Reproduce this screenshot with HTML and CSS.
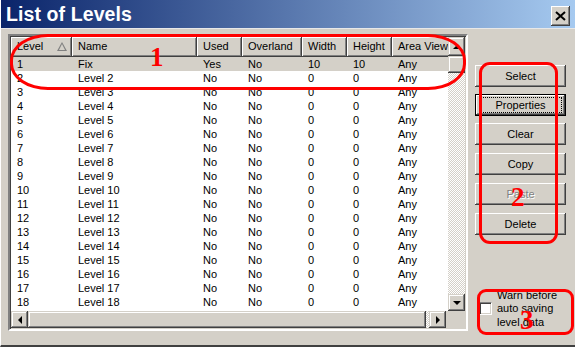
FILE: index.html
```html
<!DOCTYPE html>
<html lang="en">
<head>
  <meta charset="UTF-8">
  <title>List of Levels</title>
  <link rel="stylesheet" href="styles.css">
</head>
<body>
  <div class="window">
    <div class="titlebar">
      <span class="title">List of Levels</span>
      <button class="close">
        <svg width="11" height="10" viewBox="0 0 11 10"><path d="M1 1 L10 9 M10 1 L1 9" stroke="#000" stroke-width="2"/></svg>
      </button>
    </div>

    <div class="main">
      <div class="listview">
        <div class="lv-top">
          <div class="grid">
            <div class="row head">
              <span>Level<i class="sort"></i></span><span>Name</span><span>Used</span><span>Overland</span><span>Width</span><span>Height</span><span>Area View</span>
            </div>
            <div class="row sel"><span>1</span><span>Fix</span><span>Yes</span><span>No</span><span>10</span><span>10</span><span>Any</span></div>
            <div class="row"><span>2</span><span>Level 2</span><span>No</span><span>No</span><span>0</span><span>0</span><span>Any</span></div>
            <div class="row"><span>3</span><span>Level 3</span><span>No</span><span>No</span><span>0</span><span>0</span><span>Any</span></div>
            <div class="row"><span>4</span><span>Level 4</span><span>No</span><span>No</span><span>0</span><span>0</span><span>Any</span></div>
            <div class="row"><span>5</span><span>Level 5</span><span>No</span><span>No</span><span>0</span><span>0</span><span>Any</span></div>
            <div class="row"><span>6</span><span>Level 6</span><span>No</span><span>No</span><span>0</span><span>0</span><span>Any</span></div>
            <div class="row"><span>7</span><span>Level 7</span><span>No</span><span>No</span><span>0</span><span>0</span><span>Any</span></div>
            <div class="row"><span>8</span><span>Level 8</span><span>No</span><span>No</span><span>0</span><span>0</span><span>Any</span></div>
            <div class="row"><span>9</span><span>Level 9</span><span>No</span><span>No</span><span>0</span><span>0</span><span>Any</span></div>
            <div class="row"><span>10</span><span>Level 10</span><span>No</span><span>No</span><span>0</span><span>0</span><span>Any</span></div>
            <div class="row"><span>11</span><span>Level 11</span><span>No</span><span>No</span><span>0</span><span>0</span><span>Any</span></div>
            <div class="row"><span>12</span><span>Level 12</span><span>No</span><span>No</span><span>0</span><span>0</span><span>Any</span></div>
            <div class="row"><span>13</span><span>Level 13</span><span>No</span><span>No</span><span>0</span><span>0</span><span>Any</span></div>
            <div class="row"><span>14</span><span>Level 14</span><span>No</span><span>No</span><span>0</span><span>0</span><span>Any</span></div>
            <div class="row"><span>15</span><span>Level 15</span><span>No</span><span>No</span><span>0</span><span>0</span><span>Any</span></div>
            <div class="row"><span>16</span><span>Level 16</span><span>No</span><span>No</span><span>0</span><span>0</span><span>Any</span></div>
            <div class="row"><span>17</span><span>Level 17</span><span>No</span><span>No</span><span>0</span><span>0</span><span>Any</span></div>
            <div class="row"><span>18</span><span>Level 18</span><span>No</span><span>No</span><span>0</span><span>0</span><span>Any</span></div>
          </div>
          <div class="vscroll">
            <div class="sbtn"><i class="arr up"></i></div>
            <div class="sbtn thumb"></div>
            <div class="track"></div>
            <div class="sbtn"><i class="arr down"></i></div>
          </div>
        </div>
        <div class="hscroll">
          <div class="sbtn"><i class="arr left"></i></div>
          <div class="htrack"><div class="sbtn hthumb"></div></div>
          <div class="sbtn"><i class="arr right"></i></div>
          <div class="corner"></div>
        </div>
      </div>

      <div class="side">
        <div class="buttons">
          <button class="btn">Select</button>
          <button class="btn default"><span class="focus">Properties</span></button>
          <button class="btn">Clear</button>
          <button class="btn">Copy</button>
          <button class="btn" disabled>Paste</button>
          <button class="btn">Delete</button>
        </div>
        <label class="check">
          <span class="box"></span>
          <span class="check-text">Warn before<br>auto saving<br>level data</span>
        </label>
      </div>
    </div>

    <!-- red annotations drawn over the dialog -->
    <div class="mark mark-1"></div>
    <div class="mark mark-2"></div>
    <div class="mark mark-3"></div>
    <span class="num num-1">1</span>
    <span class="num num-2">2</span>
    <span class="num num-3">3</span>
  </div>
</body>
</html>
```

FILE: styles.css
```css
body {
  margin: 0;
  background: #d4d0c8;
  font-family: "Liberation Sans", Arial, sans-serif;
  font-size: 11px;
  color: #000;
}
.window {
  position: relative;
  width: 575px;
  height: 347px;
  box-sizing: border-box;
  background: #d4d0c8;
  border-left: 1px solid #fff;
  border-bottom: 2px solid #404040;
  overflow: hidden;
}
.titlebar {
  height: 28px;
  display: flex;
  align-items: center;
  justify-content: space-between;
  padding: 0 5px 0 5px;
  background: linear-gradient(to right, #0a246a, #a6caf0);
  border-bottom: 1px solid #e8e8e8;
}
.title {
  color: #fff;
  font-weight: bold;
  font-size: 19.5px;
  letter-spacing: 0.1px;
  padding-top: 1px;
}
.close {
  width: 19px;
  height: 20px;
  margin-top: 3px;
  padding: 0;
  border: none;
  background: #d4d0c8;
  display: flex;
  align-items: center;
  justify-content: center;
  box-shadow: inset -1px -1px #404040, inset 1px 1px #fff, inset -2px -2px #808080;
}
.main {
  display: flex;
  padding: 5px 0 0 7px;
}
.listview {
  width: 460px;
  height: 297px;
  box-sizing: border-box;
  border: 2px solid;
  border-color: #808080 #fff #fff #808080;
  box-shadow: inset 1px 1px #404040, inset -1px -1px #d4d0c8;
  background: #fff;
  display: flex;
  flex-direction: column;
  padding: 1px;
}
.lv-top {
  display: flex;
  flex: 1;
  min-height: 0;
}
.grid {
  flex: 1;
  overflow: hidden;
  background: #fff;
}
.row {
  display: grid;
  grid-template-columns: 61px 125px 45px 60px 45px 45px 80px;
  height: 14px;
  line-height: 14px;
  white-space: nowrap;
}
.row span {
  padding-left: 6px;
  overflow: hidden;
}
.row.sel {
  background: #d4d0c8;
}
.row.head {
  height: 20px;
  line-height: 19px;
  background: #d4d0c8;
}
.row.head span {
  position: relative;
  box-shadow: inset -1px -1px #404040, inset 1px 1px #fff, inset -2px -2px #808080;
}
.sort {
  position: absolute;
  right: 5px;
  top: 5px;
  width: 0;
  height: 0;
  border-left: 5px solid transparent;
  border-right: 5px solid transparent;
  border-bottom: 9px solid #808080;
}
.sort::after {
  content: "";
  position: absolute;
  left: -3px;
  top: 2px;
  border-left: 3px solid transparent;
  border-right: 3px solid transparent;
  border-bottom: 6px solid #d4d0c8;
}
.vscroll {
  width: 17px;
  display: flex;
  flex-direction: column;
}
.sbtn {
  width: 17px;
  height: 17px;
  flex: none;
  box-sizing: border-box;
  background: #d4d0c8;
  box-shadow: inset -1px -1px #404040, inset 1px 1px #d4d0c8, inset -2px -2px #808080, inset 2px 2px #fff;
  display: flex;
  align-items: center;
  justify-content: center;
}
.vscroll .sbtn:first-child {
  height: 19px;
}
.track {
  flex: 1;
  background: repeating-conic-gradient(#fff 0 25%, #d4d0c8 0 50%) 0 0 / 2px 2px;
}
.arr {
  width: 0;
  height: 0;
}
.arr.up {
  border-left: 4px solid transparent;
  border-right: 4px solid transparent;
  border-bottom: 4px solid #000;
}
.arr.down {
  border-left: 4px solid transparent;
  border-right: 4px solid transparent;
  border-top: 4px solid #000;
}
.arr.left {
  border-top: 4px solid transparent;
  border-bottom: 4px solid transparent;
  border-right: 4px solid #000;
}
.arr.right {
  border-top: 4px solid transparent;
  border-bottom: 4px solid transparent;
  border-left: 4px solid #000;
}
.hscroll {
  display: flex;
  height: 17px;
  flex: none;
}
.htrack {
  flex: 1;
  display: flex;
  background: repeating-conic-gradient(#fff 0 25%, #d4d0c8 0 50%) 0 0 / 2px 2px;
}
.hthumb {
  width: auto;
  flex: 1;
  margin-right: 3px;
}
.corner {
  width: 19px;
  background: #d4d0c8;
}
.side {
  width: 91px;
  margin-left: 7px;
  display: flex;
  flex-direction: column;
}
.buttons {
  display: flex;
  flex-direction: column;
  gap: 7px;
  padding-top: 31px;
}
.btn {
  height: 22px;
  padding: 0;
  border: none;
  background: #d4d0c8;
  font-family: "Liberation Sans", Arial, sans-serif;
  font-size: 11px;
  color: #000;
  box-shadow: inset -1px -1px #404040, inset 1px 1px #fff, inset -2px -2px #808080;
}
.btn:nth-child(n+4) {
  margin-top: 1px;
}
.btn.default {
  box-shadow: inset 0 0 0 1px #000, inset -2px -2px #404040, inset 2px 2px #fff, inset -3px -3px #808080;
  display: flex;
  align-items: center;
  justify-content: center;
}
.focus {
  display: block;
  width: 80px;
  line-height: 14px;
  outline: 1px dotted #000;
}
.btn:disabled {
  color: #808080;
  text-shadow: 1px 1px 0 #fff;
}
.check {
  margin-top: auto;
  margin-bottom: 2px;
  display: flex;
  align-items: center;
  gap: 5px;
  padding-left: 4px;
  line-height: 13.5px;
}
.box {
  width: 13px;
  height: 13px;
  box-sizing: border-box;
  background: #fff;
  border: 1px solid;
  border-color: #808080 #fff #fff #808080;
  box-shadow: inset 1px 1px #404040, inset -1px -1px #d4d0c8;
}
.mark {
  position: absolute;
  border: 3px solid #f00;
  box-sizing: border-box;
}
.mark-1 {
  left: 9px;
  top: 34px;
  width: 456px;
  height: 56px;
  border-radius: 38px / 26px;
}
.mark-2 {
  left: 478px;
  top: 62px;
  width: 79px;
  height: 182px;
  border-radius: 11px;
}
.mark-3 {
  left: 476px;
  top: 289px;
  width: 97px;
  height: 46px;
  border-radius: 9px;
}
.num {
  position: absolute;
  color: #f00;
  font-family: "Liberation Serif", "Times New Roman", serif;
  font-weight: bold;
  font-size: 27px;
  line-height: 1;
}
.num-1 {
  left: 149px;
  top: 44px;
}
.num-2 {
  left: 510px;
  top: 184px;
}
.num-3 {
  left: 519px;
  top: 307px;
}
```
